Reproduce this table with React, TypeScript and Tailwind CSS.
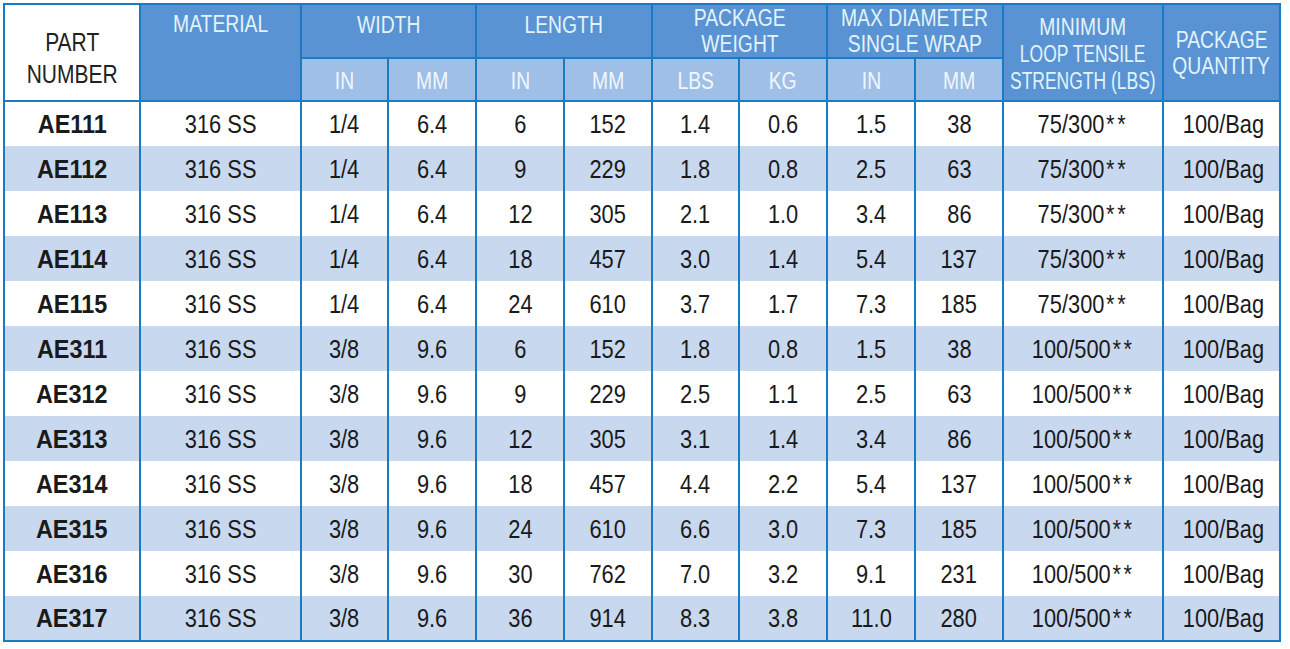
import React from "react";

const rows: string[][] = [
  ["AE111", "316 SS", "1/4", "6.4", "6", "152", "1.4", "0.6", "1.5", "38", "75/300", "100/Bag"],
  ["AE112", "316 SS", "1/4", "6.4", "9", "229", "1.8", "0.8", "2.5", "63", "75/300", "100/Bag"],
  ["AE113", "316 SS", "1/4", "6.4", "12", "305", "2.1", "1.0", "3.4", "86", "75/300", "100/Bag"],
  ["AE114", "316 SS", "1/4", "6.4", "18", "457", "3.0", "1.4", "5.4", "137", "75/300", "100/Bag"],
  ["AE115", "316 SS", "1/4", "6.4", "24", "610", "3.7", "1.7", "7.3", "185", "75/300", "100/Bag"],
  ["AE311", "316 SS", "3/8", "9.6", "6", "152", "1.8", "0.8", "1.5", "38", "100/500", "100/Bag"],
  ["AE312", "316 SS", "3/8", "9.6", "9", "229", "2.5", "1.1", "2.5", "63", "100/500", "100/Bag"],
  ["AE313", "316 SS", "3/8", "9.6", "12", "305", "3.1", "1.4", "3.4", "86", "100/500", "100/Bag"],
  ["AE314", "316 SS", "3/8", "9.6", "18", "457", "4.4", "2.2", "5.4", "137", "100/500", "100/Bag"],
  ["AE315", "316 SS", "3/8", "9.6", "24", "610", "6.6", "3.0", "7.3", "185", "100/500", "100/Bag"],
  ["AE316", "316 SS", "3/8", "9.6", "30", "762", "7.0", "3.2", "9.1", "231", "100/500", "100/Bag"],
  ["AE317", "316 SS", "3/8", "9.6", "36", "914", "8.3", "3.8", "11.0", "280", "100/500", "100/Bag"],
];

const widths = [136, 161, 87, 88, 88, 88, 87, 88, 88, 88, 160, 117];

const font = { fontFamily: '"Liberation Sans", Arial, sans-serif' };

function N({
  children,
  bold = false,
  tight = false,
}: {
  children: React.ReactNode;
  bold?: boolean;
  tight?: boolean;
}) {
  return (
    <div className="flex justify-center">
      <span
        className={`shrink-0 inline-block whitespace-nowrap ${
          bold ? "scale-x-[0.9]" : tight ? "scale-x-[0.76]" : "scale-x-[0.84]"
        }`}
      >
        {children}
      </span>
    </div>
  );
}

export default function App() {
  const hdr =
    "border-2 border-[#1b7bc2] bg-[#5a93d3] text-[#e2f3fb] text-[23px] leading-[26px] font-normal text-center p-0 whitespace-nowrap";
  const sub =
    "border-2 border-[#1b7bc2] bg-[#a0bfe6] text-[#eef7fd] text-[23px] leading-[26px] font-normal text-center h-[43px] p-0 whitespace-nowrap";
  return (
    <div className="w-[1290px] h-[649px] bg-white overflow-hidden" style={font}>
      <table className="ml-[3px] mt-[3px] w-[1278px] border-collapse table-fixed border-2 border-[#1b7bc2]">
        <colgroup>
          {widths.map((w, i) => (
            <col key={i} style={{ width: w }} />
          ))}
        </colgroup>
        <thead>
          <tr className="h-[54px]">
            <th
              rowSpan={2}
              className="border-2 border-[#1b7bc2] bg-white text-[#222] text-[25px] leading-[32px] font-normal text-center align-top p-0 pt-[21px] whitespace-nowrap"
            >
              <N>PART</N>
              <N>NUMBER</N>
            </th>
            <th rowSpan={2} className={`${hdr} align-top pt-[6px]`}>
              <N>MATERIAL</N>
            </th>
            <th colSpan={2} className={`${hdr} align-top pt-[7px]`}>
              <N>WIDTH</N>
            </th>
            <th colSpan={2} className={`${hdr} align-top pt-[7px]`}>
              <N>LENGTH</N>
            </th>
            <th colSpan={2} className={`${hdr} align-top pt-0`}>
              <N>PACKAGE</N>
              <N>WEIGHT</N>
            </th>
            <th colSpan={2} className={`${hdr} align-top pt-0`}>
              <N>MAX DIAMETER</N>
              <N>SINGLE WRAP</N>
            </th>
            <th rowSpan={2} className={`${hdr} align-middle leading-[27px] pt-[3px]`}>
              <N>MINIMUM</N>
              <N tight>LOOP TENSILE</N>
              <N tight>STRENGTH (LBS)</N>
            </th>
            <th rowSpan={2} className={`${hdr} align-middle leading-[25px]`}>
              <N>PACKAGE</N>
              <N>QUANTITY</N>
            </th>
          </tr>
          <tr>
            {["IN", "MM", "IN", "MM", "LBS", "KG", "IN", "MM"].map((t, i) => (
              <th key={i} className={`${sub} pt-[2px]`}>
                <N>{t}</N>
              </th>
            ))}
          </tr>
        </thead>
        <tbody>
          {rows.map((r, i) => (
            <tr key={r[0]} className={`h-[45px] ${i % 2 === 1 ? "bg-[#c8d8ee]" : "bg-white"}`}>
              {r.map((c, j) => (
                <td
                  key={j}
                  className={`border-x-2 border-[#1b7bc2] text-center align-middle p-0 text-[#1a1a1a] text-[26px] leading-[30px] whitespace-nowrap ${
                    j === 0 ? "font-bold" : "font-normal"
                  } ${j === 11 ? "pl-[4px]" : ""}`}
                >
                  {j === 0 ? (
                    <N bold>{c}</N>
                  ) : (
                    <N>
                      {c}
                      {j === 10 ? <span className="tracking-[3px] ml-[2px]">**</span> : null}
                    </N>
                  )}
                </td>
              ))}
            </tr>
          ))}
        </tbody>
      </table>
    </div>
  );
}
